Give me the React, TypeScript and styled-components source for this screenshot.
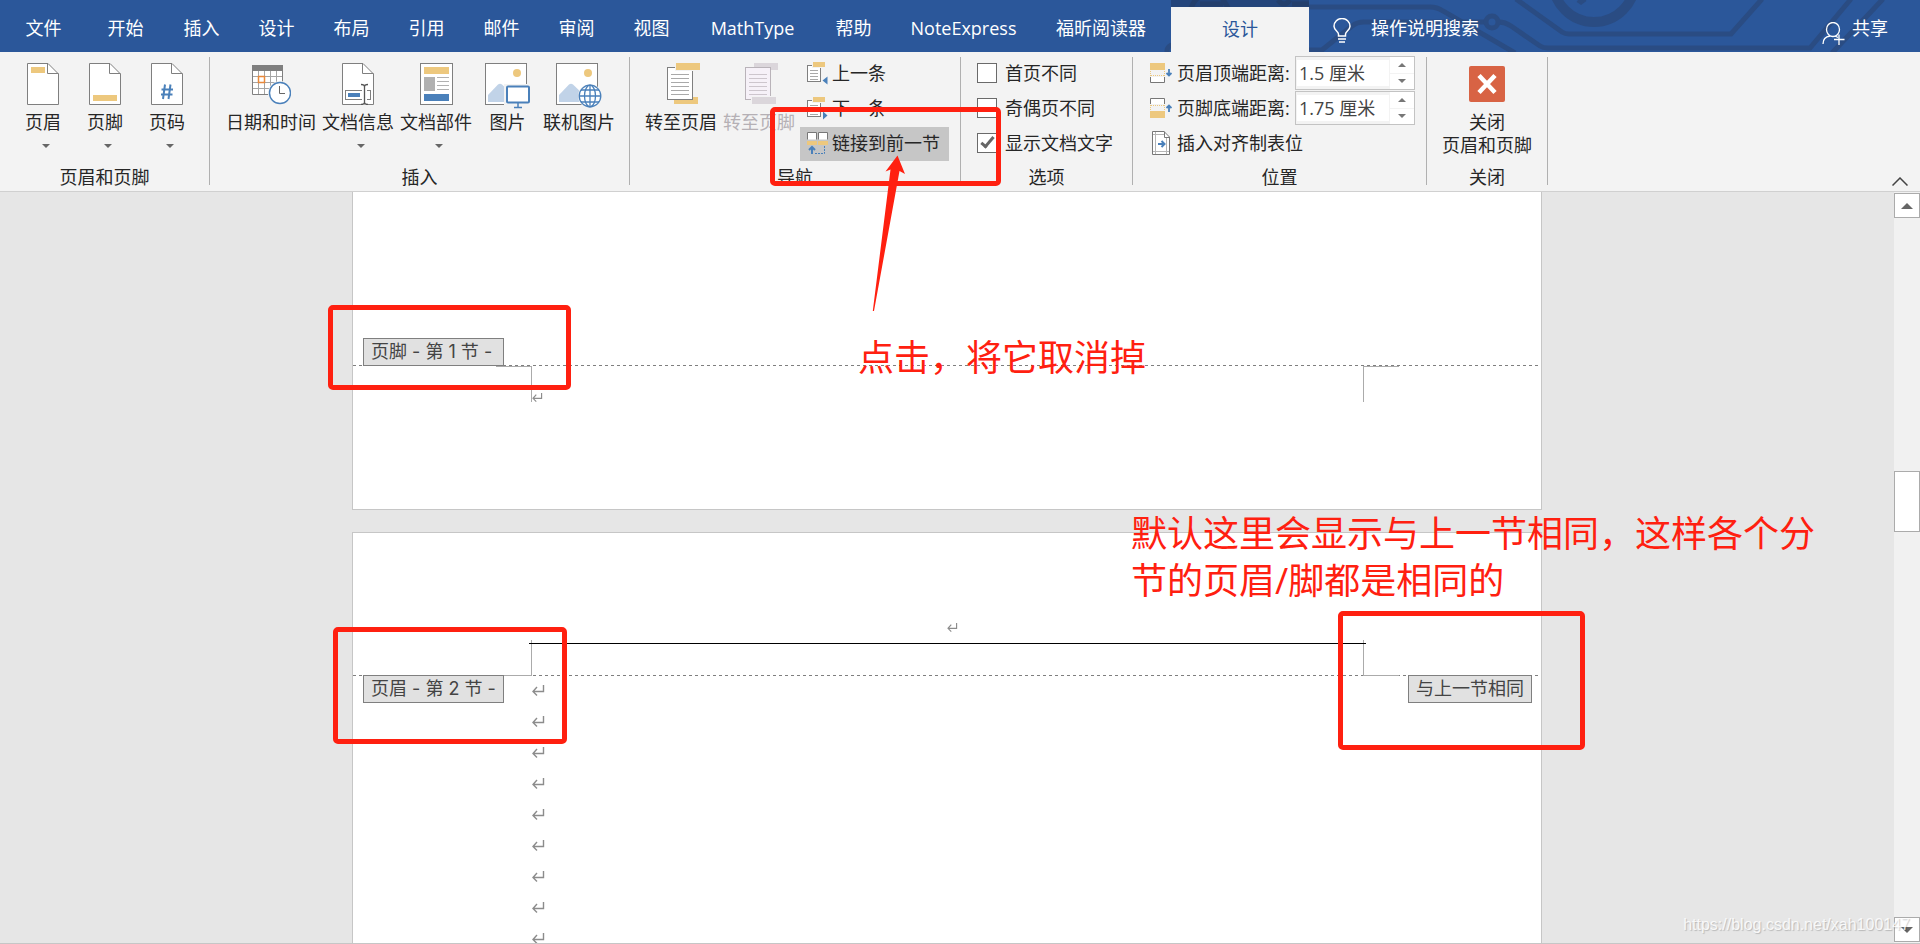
import React from 'react';
import styled, { createGlobalStyle, css } from 'styled-components';

const RED = '#ff2010';
const BLUE = '#2b579a';
const INK = '#262626';
const GOLD = '#edc87e';
const ACCENT = '#4a80ba';
const LINE = '#7f7f7f';

const GlobalStyle = createGlobalStyle`
  *, *::before, *::after { box-sizing: border-box; }
  body { margin: 0; }
  body, button, input {
    font-family: 'Open Sans', 'Noto Sans CJK SC', sans-serif;
    font-size: 18px;
    color: ${INK};
  }
  button { border: 0; padding: 0; background: none; cursor: pointer; white-space: nowrap; }
  svg { display: block; flex: none; }
`;

const Shell = styled.div`
  position: relative;
  display: flex;
  flex-direction: column;
  height: 100vh;
  overflow: hidden;
  background: #e6e6e6;
`;

/* ---------- title tabs ---------- */

const TabBar = styled.header`
  position: relative;
  display: flex;
  flex: none;
  align-items: stretch;
  height: 52px;
  background: ${BLUE};
`;

const Circuit = styled.svg`
  position: absolute;
  top: 0;
  right: 0;
`;

const Tabs = styled.nav`
  position: relative;
  display: flex;
  padding-left: 6px;
`;

const Tab = styled.button<{ $width?: number; $active?: boolean }>`
  width: ${(p) => p.$width ?? 75}px;
  line-height: 24px;
  padding-top: 4px;
  color: #fff;
  ${(p) =>
    p.$active &&
    css`
      margin: 7px 0 0 11px;
      padding: 0 0 2px;
      background: #f3f3f3;
      color: ${BLUE};
    `}
`;

const TellMe = styled.button`
  position: relative;
  display: flex;
  align-items: center;
  gap: 20px;
  padding: 4px 0 0 24px;
  color: #fff;
  line-height: 24px;
`;

const Share = styled(TellMe)`
  margin-left: auto;
  padding: 4px 32px 0 0;
  gap: 7px;
`;

const ShareIcon = styled.svg`
  margin-top: 10px;
`;

const BulbIcon = styled.svg`
  margin-top: 4px;
`;

/* ---------- ribbon ---------- */

const Ribbon = styled.section`
  position: relative;
  display: flex;
  flex: none;
  height: 140px;
  padding-top: 5px;
  background: #f3f3f3;
  border-bottom: 1px solid #d0d0d0;
`;

const GroupBox = styled.div<{ $width: number }>`
  display: flex;
  flex: none;
  flex-direction: column;
  width: ${(p) => p.$width}px;
`;

const GroupBody = styled.div<{ $pad: number }>`
  display: flex;
  height: 107px;
  padding-left: ${(p) => p.$pad}px;
`;

const GroupLabel = styled.div`
  line-height: 27px;
  text-align: center;
`;

const Separator = styled.div`
  flex: none;
  width: 1px;
  height: 128px;
  background: #b0b0b0;
`;

const BigBox = styled.button<{ $min: number }>`
  display: flex;
  flex-direction: column;
  align-items: center;
  min-width: ${(p) => p.$min}px;
  padding: 6px 3px 0;
  &:disabled { color: #b5b0b5; cursor: default; }
`;

const IconSlot = styled.span`
  display: flex;
  height: 48px;
`;

const CloseSlot = styled(IconSlot)`
  padding-top: 3px;
`;

const BigLabel = styled.span`
  line-height: 23px;
`;

const DropArrow = styled.span`
  width: 0;
  margin: 10px 0 0 5px;
  border: 4px solid transparent;
  border-top-color: #666;
  border-bottom: 0;
`;

const Stack = styled.div`
  display: grid;
  grid-auto-rows: 34px;
  row-gap: 1px;
  align-content: start;
  margin-top: -1px;
`;

const SmallButton = styled.button<{ $pressed?: boolean }>`
  display: flex;
  align-items: center;
  gap: 4px;
  padding: 0 9px 2px 7px;
  line-height: 24px;
  background: ${(p) => (p.$pressed ? '#c6c6c6' : 'none')};
`;

const NavStack = styled(Stack)`
  margin: 0 0 0 2px;
`;

const CheckLabel = styled.label`
  display: flex;
  align-items: center;
  gap: 8px;
  line-height: 24px;
  white-space: nowrap;
`;

const Check = styled.input`
  appearance: none;
  width: 20px;
  height: 20px;
  margin: 0;
  border: 1px solid #6a6a6a;
  background: #fff;
  display: grid;
  place-items: center;
  &:checked::before {
    content: '';
    width: 7px;
    height: 14px;
    margin-bottom: 4px;
    border: solid #666;
    border-width: 0 3px 3px 0;
    transform: rotate(40deg);
  }
`;

const Field = styled.div`
  display: flex;
  align-items: center;
  gap: 5px;
`;

const FieldLabel = styled.label`
  width: 113px;
  line-height: 24px;
  white-space: nowrap;
`;

const PlainRow = styled.button`
  display: flex;
  align-items: center;
  gap: 5px;
  line-height: 24px;
`;

const SpinBox = styled.div`
  display: flex;
  width: 120px;
  height: 34px;
  border: 1px solid #c3c3c3;
`;

const SpinInput = styled.input`
  width: 92px;
  height: 26px;
  margin: 3px 1px;
  padding: 0 2px 2px;
  border: 0;
  background: #fff;
  color: #444;
`;

const SpinButtons = styled.div`
  display: grid;
  flex: 1;
  grid-template-rows: 1fr 1fr;
  row-gap: 1px;
`;

const SpinButton = styled.button<{ $down?: boolean }>`
  display: grid;
  place-items: center;
  background: #fff;
  &::before {
    content: '';
    border: 4px solid transparent;
    ${(p) =>
      p.$down
        ? 'border-top-color: #777; border-bottom: 0;'
        : 'border-bottom-color: #777; border-top: 0;'}
  }
`;

const Collapse = styled.button`
  align-self: flex-end;
  margin: 0 12px 5px auto;
`;

/* ---------- document ---------- */

const Workspace = styled.main`
  display: flex;
  flex: 1;
  min-height: 0;
  border-bottom: 1px solid #c6c6c6;
`;

const Canvas = styled.div`
  display: flex;
  flex: 1;
  justify-content: center;
  min-width: 0;
`;

const Pages = styled.div`
  position: relative;
  display: flex;
  flex-direction: column;
  gap: 22px;
  width: 1190px;
`;

const FirstPage = styled.section`
  flex: none;
  height: 318px;
  padding-top: 146px;
  background: #fff;
  border: 1px solid #c6c6c6;
  border-top: 0;
`;

const SecondPage = styled.section`
  flex: 1;
  min-height: 0;
  overflow: hidden;
  background: #fff;
  border: 1px solid #c6c6c6;
  border-bottom: 0;
`;

const Dashes = styled.div`
  height: 1px;
  background: repeating-linear-gradient(90deg, ${LINE} 0 3px, transparent 3px 6px);
`;

const Tag = styled.div<{ $min?: number }>`
  position: relative;
  flex: none;
  min-width: ${(p) => p.$min ?? 0}px;
  height: 28px;
  padding: 0 7px;
  border: 1px solid ${LINE};
  background: #e1e1e1;
  color: #444;
  font-family: Inter, 'Noto Sans CJK SC', sans-serif;
  line-height: 25px;
  white-space: nowrap;
`;

const TagRow = styled.div`
  display: flex;
  justify-content: space-between;
  align-items: flex-start;
  height: 27px;
  padding: 0 9px 0 10px;
`;

const BodyRow = styled(TagRow)`
  height: auto;
  margin-top: -1px;
`;

const FooterArea = styled.div`
  display: flex;
  padding: 0 142px 0 143px;
`;

const HeaderArea = styled(FooterArea)`
  height: 35px;
`;

const Corner = styled.span<{ $side: 'left' | 'right'; $edge: 'top' | 'bottom' }>`
  flex: none;
  width: 36px;
  height: 36px;
  border: 0 solid #ababab;
  border-${(p) => p.$edge}-width: 1px;
  border-${(p) => (p.$side === 'left' ? 'right' : 'left')}-width: 1px;
`;

const FooterText = styled.div`
  display: flex;
  flex: 1;
  align-items: flex-end;
`;

const HeaderRule = styled.span`
  position: relative;
  flex: 1;
  height: 1px;
  margin: 3px -3px 0;
  background: #000;
`;

const HeaderMark = styled.div`
  display: flex;
  justify-content: center;
  align-items: center;
  height: 107px;
  padding: 81px 0 0 11px;
`;

const Paragraphs = styled.div`
  flex: 1;
  padding-left: 28px;
`;

const Paragraph = styled.div`
  display: flex;
  align-items: center;
  height: 31px;
`;

/* ---------- scroll bar ---------- */

const ScrollBar = styled.div`
  display: flex;
  flex: none;
  flex-direction: column;
  width: 26px;
  padding: 1px 0;
  background: #f1f1f1;
`;

const ScrollButton = styled.button<{ $down?: boolean }>`
  display: grid;
  flex: none;
  place-items: center;
  height: 25px;
  border: 1px solid #ababab;
  background: #fff;
  &::before {
    content: '';
    border: 6px solid transparent;
    ${(p) =>
      p.$down
        ? 'border-top-color: #666; border-bottom: 0;'
        : 'border-bottom-color: #666; border-top: 0;'}
  }
`;

const ScrollTrack = styled.div`
  flex: 1;
  padding-top: 253px;
`;

const Thumb = styled.div`
  height: 61px;
  border: 1px solid #ababab;
  background: #fff;
`;

/* ---------- hand-made annotations ---------- */

const Frame = styled.div<{ $x: number; $y: number; $w: number; $h: number }>`
  position: absolute;
  z-index: 2;
  left: ${(p) => p.$x}px;
  top: ${(p) => p.$y}px;
  width: ${(p) => p.$w}px;
  height: ${(p) => p.$h}px;
  border: 5px solid ${RED};
  border-radius: 5px;
  pointer-events: none;
`;

const Arrow = styled.svg`
  position: absolute;
  z-index: 3;
  left: 872px;
  top: 103px;
  pointer-events: none;
`;

const Note = styled.p<{ $x: number; $y: number; $w: number }>`
  position: absolute;
  z-index: 2;
  left: ${(p) => p.$x}px;
  top: ${(p) => p.$y}px;
  width: ${(p) => p.$w}px;
  margin: 0;
  color: ${RED};
  font-size: 36px;
  line-height: 47px;
`;

const Watermark = styled.span`
  position: absolute;
  right: 10px;
  bottom: 8px;
  color: rgba(255, 255, 255, 0.85);
  font-family: 'Liberation Sans', Arial, sans-serif;
  font-size: 16px;
  line-height: 22px;
  text-shadow: 1px 1px 1px rgba(0, 0, 0, 0.2);
  pointer-events: none;
`;

/* ---------- icons ---------- */

const PageSheet = ({ children }: { children?: React.ReactNode }) => (
  <svg width="32" height="42" viewBox="0 0 32 42" fill="none" stroke={LINE}>
    <path d="M.5.5H21L31.5 11V41.5H.5Z" fill="#fff" />
    <path d="M20.5.5V10.5H31.5" />
    {children}
  </svg>
);

const HeaderIcon = () => (
  <PageSheet><rect x="4" y="4" width="14" height="6" fill={GOLD} stroke="none" /></PageSheet>
);
const FooterIcon = () => (
  <PageSheet><rect x="4" y="32" width="24" height="6" fill={GOLD} stroke="none" /></PageSheet>
);
const NumberIcon = () => (
  <PageSheet><path d="M14 21.5L12 36M19.500 21.5L17.500 36M10.500 26.500H22M10 31.500H21.500" stroke={ACCENT} strokeWidth="2" /></PageSheet>
);

const DateIcon = () => (
  <svg width="39" height="44" viewBox="0 0 39 44" fill="none">
    <path d="M.5 4V31.500H30.500V4Z" fill="#fff" stroke={LINE} />
    <path d="M6.500 8V31M12.500 8V31M18.500 8V31M24.500 8V31M1 13.500H30M1 19.500H30M1 25.500H30" stroke="#a5a5a5" />
    <rect y="2" width="31" height="6" fill={LINE} />
    <rect x="6.500" y="13.500" width="6" height="6" fill="#fff" stroke="#e8883a" strokeWidth="1.500" />
    <circle cx="28" cy="30" r="12" fill="#f3f3f3" />
    <circle cx="28" cy="30" r="10.500" fill="#fff" stroke={ACCENT} strokeWidth="1.400" />
    <path d="M27.500 23V30.500H33" stroke="#666" />
  </svg>
);

const DocInfoIcon = () => (
  <PageSheet>
    <rect x="3.500" y="27.500" width="25" height="9" fill="#fff" />
    <rect x="6" y="30" width="12" height="4" fill={ACCENT} stroke="none" />
    <path d="M22.500 22V42" stroke="#fff" strokeWidth="5" />
    <path d="M19 21.500C21 21.500 22.500 22 22.500 23.500V39.500C22.500 41 21 41.500 19 41.500M26 21.500C24 21.500 22.500 22 22.500 23.500V39.500C22.500 41 24 41.500 26 41.500" stroke="#555" strokeWidth="1.300" />
  </PageSheet>
);

const PartsIcon = () => (
  <svg width="33" height="42" viewBox="0 0 33 42">
    <rect x=".5" y=".5" width="32" height="41" fill="#fff" stroke={LINE} />
    <rect x="4" y="4" width="25" height="7" fill={GOLD} />
    <rect x="4" y="14" width="11" height="14" fill="#b1b1b1" />
    <path d="M17 14.500H29M17 18.500H29M17 22.500H29M17 26.500H29" stroke="#b1b1b1" />
    <rect x="4" y="31" width="25" height="7" fill={ACCENT} />
  </svg>
);

const Picture = ({ children }: { children: React.ReactNode }) => (
  <svg width="46" height="46" viewBox="0 0 46 46" fill="none">
    <rect x=".5" y=".5" width="41" height="41" fill="#fff" stroke={LINE} />
    <circle cx="32" cy="10" r="4" fill={GOLD} />
    <path d="M3 39V32L13 21.500Q15 20 17 21.500L30 34V39Z" fill="#c1d3e8" />
    {children}
  </svg>
);

const PictureIcon = () => (
  <Picture>
    <rect x="19" y="21" width="27" height="21" fill="#f3f3f3" />
    <rect x="22" y="23.500" width="22" height="16" rx="1" fill="#fff" stroke={ACCENT} strokeWidth="2" />
    <path d="M33 40V44M29 44.500H37" stroke={ACCENT} strokeWidth="1.500" />
  </Picture>
);

const OnlinePictureIcon = () => (
  <Picture>
    <circle cx="34" cy="33" r="12" fill="#f3f3f3" />
    <g stroke={ACCENT} strokeWidth="1.300">
      <circle cx="34" cy="33" r="10.800" fill="#fff" />
      <ellipse cx="34" cy="33" rx="5.500" ry="10.800" />
      <path d="M34 22V44M23 33H45M25 27H43M25 39H43" />
    </g>
  </Picture>
);

const GotoHeaderIcon = () => (
  <svg width="37" height="42" viewBox="-4 0 37 42">
    <rect x="7" y="34" width="24" height="7" fill={GOLD} />
    <rect x=".5" y="4.500" width="25" height="32" fill="#fff" stroke={LINE} />
    <rect x="8" y="0" width="25" height="8" fill="#f3f3f3" />
    <rect x="9" y="0" width="24" height="7" fill={GOLD} />
    <path d="M4 11.500H22M4 15.500H22M4 19.500H22M4 23.500H22M4 27.500H22M4 31.500H22" stroke="#a9a9a9" />
  </svg>
);

const GotoFooterIcon = () => (
  <svg width="37" height="42" viewBox="-4 0 37 42">
    <rect x="9" y="0" width="24" height="7" fill="#dbd6db" />
    <rect x=".5" y="4.500" width="25" height="32" fill="#f6f1f8" stroke="#b9b3b9" />
    <rect x="6" y="33" width="26" height="8" fill="#f3f3f3" />
    <rect x="7" y="34" width="24" height="7" fill="#dbd6db" />
    <path d="M4 11.500H22M4 15.500H22M4 19.500H22M4 23.500H22M4 27.500H22M4 31.500H22" stroke="#cdc6cd" />
  </svg>
);

const StepIcon = ({ next }: { next?: boolean }) => (
  <svg width="21" height="23" viewBox="0 0 21 23">
    <rect x=".5" y="3.500" width="13" height="16" fill="#fff" stroke={LINE} />
    <rect x="5" width="13" height="6" fill="#f3f3f3" />
    <rect x="6" width="12" height="5" fill={GOLD} />
    <path d="M3 8.500H11M3 11.500H11M3 14.500H11M3 17.500H11" stroke="#a9a9a9" />
    <path d={next ? 'M16 14.500V22.500L20.500 18.500Z' : 'M20.500 14.500V22.500L15.500 18.500Z'} fill={ACCENT} />
  </svg>
);

const LinkIcon = () => (
  <svg width="21" height="22" viewBox="0 0 21 22" fill="none">
    <path d="M.5 7.500V.5H9.500V7.500M11.500 7.500V.5H20.500V7.500" fill="#fff" stroke="#777" />
    <path d="M0 11H10M11 11H21" stroke={GOLD} strokeWidth="4" />
    <path d="M5 22V15M2 18L5 15L8 18" stroke={ACCENT} strokeWidth="2" />
    <path d="M8 21.500H17.500V14" stroke={ACCENT} strokeDasharray="2 1" />
  </svg>
);

const DistanceIcon = ({ footer }: { footer?: boolean }) => (
  <svg width="22" height="20" viewBox="0 0 22 20" fill="none">
    {footer ? (
      <>
        <path d="M.5 6V.5H14.500V6" fill="#fff" stroke="#777" />
        <path d="M.5 7V12M14.500 7V12M1 7.500H15" stroke={GOLD} strokeDasharray="1 1" />
        <rect y="13" width="15" height="7" fill={GOLD} />
        <path d="M19 14V7M16.500 10L19 7.500L21.500 10" stroke={ACCENT} strokeWidth="1.800" />
      </>
    ) : (
      <>
        <rect width="15" height="7" fill={GOLD} />
        <path d="M.5 8V13M14.500 8V13M1 12.500H15" stroke={GOLD} strokeDasharray="1 1" />
        <path d="M.5 14V19.500H14.500V14" fill="#fff" stroke="#777" />
        <path d="M19 6V13M16.500 10L19 12.500L21.500 10" stroke={ACCENT} strokeWidth="1.800" />
      </>
    )}
  </svg>
);

const TabStopIcon = () => (
  <svg width="22" height="24" viewBox="0 0 22 24" fill="none" stroke="#777">
    <path d="M2.500.5H14L19.500 6V23.500H2.500Z" fill="#fff" />
    <path d="M14.500.5V6.500H19.500" />
    <path d="M5.500 1V23M16.500 7V23M3 3.500H14M3 20.500H19" stroke="#b5b5b5" />
    <path d="M8 13H14M11.500 10L14.500 13L11.500 16" stroke={ACCENT} strokeWidth="2" />
  </svg>
);

const CloseIcon = () => (
  <svg width="36" height="36" viewBox="0 0 36 36" fill="none">
    <rect width="36" height="36" rx="2" fill="#d86344" />
    <path d="M10 9.500L26 26.500M26 9.500L10 26.500" stroke="#fff" strokeWidth="4.500" />
  </svg>
);

const ReturnMark = ({ small }: { small?: boolean }) => (
  <svg width={small ? 11 : 13} height={small ? 9 : 11} viewBox="0 0 13 11" fill="none" stroke="#8c8c8c" strokeWidth="1.400">
    <path d="M11.500 0V6.500H1M5 2L1 6.500L5 10.500" />
  </svg>
);

/* ---------- pieces ---------- */

type BigButtonProps = {
  icon: React.ReactNode;
  label: string;
  menu?: boolean;
  min?: number;
  disabled?: boolean;
};

const BigButton = ({ icon, label, menu, min = 62, disabled }: BigButtonProps) => (
  <BigBox $min={min} disabled={disabled}>
    <IconSlot>{icon}</IconSlot>
    <BigLabel>{label}</BigLabel>
    {menu && <DropArrow />}
  </BigBox>
);

type GroupProps = { label: string; width: number; pad: number; children: React.ReactNode };

const Group = ({ label, width, pad, children }: GroupProps) => (
  <>
    <GroupBox $width={width}>
      <GroupBody $pad={pad}>{children}</GroupBody>
      <GroupLabel>{label}</GroupLabel>
    </GroupBox>
    <Separator />
  </>
);

type DistanceProps = { id: string; label: string; value: string; footer?: boolean };

const Distance = ({ id, label, value, footer }: DistanceProps) => (
  <Field>
    <DistanceIcon footer={footer} />
    <FieldLabel htmlFor={id}>{label}</FieldLabel>
    <SpinBox>
      <SpinInput id={id} defaultValue={value} />
      <SpinButtons>
        <SpinButton aria-label="增加" />
        <SpinButton $down aria-label="减少" />
      </SpinButtons>
    </SpinBox>
  </Field>
);

const TABS: { label: string; width?: number }[] = [
  { label: '文件' },
  { label: '开始', width: 89 },
  { label: '插入', width: 63 },
  { label: '设计', width: 87 },
  { label: '布局', width: 63 },
  { label: '引用', width: 87 },
  { label: '邮件', width: 63 },
  { label: '审阅', width: 87 },
  { label: '视图', width: 63 },
  { label: 'MathType', width: 139 },
  { label: '帮助', width: 63 },
  { label: 'NoteExpress', width: 157 },
  { label: '福昕阅读器', width: 118 },
];

export default function App() {
  return (
    <Shell>
      <GlobalStyle />
      <TabBar>
        <Circuit width="757" height="52" viewBox="1163 0 757 52" fill="none" stroke="#2a4c83" strokeWidth="5">
          <path d="M1309 7H1430Q1437 7 1443 11L1515 53" />
          <path d="M1305 50H1322L1352 26Q1357 22 1364 22H1485M1499 22Q1505 22 1511 26L1540 46Q1543 48 1548 48H1810L1851-1" />
          <circle cx="1492" cy="22" r="6" />
          <path d="M1516-1L1562 32Q1565 34 1569 34H1731L1762-1M1883-1L1832 53" />
          <circle cx="1594" cy="-19" r="41" strokeWidth="10" />
          <path d="M1578 0L1581 2L1585-1" />
          <circle cx="1173" cy="51" r="6" />
          <rect x="1171" y="0" width="138" height="7" fill="#24457b" stroke="none" />
          <path d="M1191 8Q1194 0 1200-4M1228 8Q1224 0 1220-4M1200 4H1223M1278 0Q1284 8 1290 0M1292 4H1309" stroke="#243f6c" />
        </Circuit>
        <Tabs>
          {TABS.map((t, i) => (
            <Tab key={i} $width={t.width}>{t.label}</Tab>
          ))}
          <Tab $width={138} $active>设计</Tab>
        </Tabs>
        <TellMe>
          <BulbIcon width="18" height="25" viewBox="0 0 18 25" fill="none" stroke="#fff" strokeWidth="1.500">
            <path d="M5.500 18V16C5.500 13.500 1 12 1 8.300A8 7.800 0 0 1 17 8.300C17 12 12.500 13.500 12.500 16V18Z" />
            <path d="M5 21H13M6 24H12" />
          </BulbIcon>
          操作说明搜索
        </TellMe>
        <Share>
          <ShareIcon width="23" height="23" viewBox="0 0 23 23" fill="none" stroke="#fff" strokeWidth="1.300">
            <ellipse cx="11" cy="7.500" rx="6.500" ry="7" />
            <path d="M1 22C1 17 4 14.500 8 14M13 14L16 15.500M17 12.500V23M12 17.500H22.500" />
          </ShareIcon>
          共享
        </Share>
      </TabBar>

      <Ribbon>
        <Group label="页眉和页脚" width={209} pad={12}>
          <BigButton icon={<HeaderIcon />} label="页眉" menu />
          <BigButton icon={<FooterIcon />} label="页脚" menu />
          <BigButton icon={<NumberIcon />} label="页码" menu />
        </Group>
        <Group label="插入" width={419} pad={13}>
          <BigButton icon={<DateIcon />} label="日期和时间" />
          <BigButton icon={<DocInfoIcon />} label="文档信息" menu />
          <BigButton icon={<PartsIcon />} label="文档部件" menu />
          <BigButton icon={<PictureIcon />} label="图片" min={65} />
          <BigButton icon={<OnlinePictureIcon />} label="联机图片" />
        </Group>
        <Group label="导航" width={330} pad={12}>
          <BigButton icon={<GotoHeaderIcon />} label="转至页眉" />
          <BigButton icon={<GotoFooterIcon />} label="转至页脚" disabled />
          <NavStack>
            <SmallButton><StepIcon />上一条</SmallButton>
            <SmallButton><StepIcon next />下一条</SmallButton>
            <SmallButton $pressed><LinkIcon />链接到前一节</SmallButton>
          </NavStack>
        </Group>
        <Group label="选项" width={171} pad={16}>
          <Stack>
            <CheckLabel><Check type="checkbox" />首页不同</CheckLabel>
            <CheckLabel><Check type="checkbox" />奇偶页不同</CheckLabel>
            <CheckLabel><Check type="checkbox" defaultChecked />显示文档文字</CheckLabel>
          </Stack>
        </Group>
        <Group label="位置" width={293} pad={17}>
          <Stack>
            <Distance id="header-distance" label="页眉顶端距离:" value="1.5 厘米" />
            <Distance id="footer-distance" label="页脚底端距离:" value="1.75 厘米" footer />
            <PlainRow><TabStopIcon />插入对齐制表位</PlainRow>
          </Stack>
        </Group>
        <Group label="关闭" width={120} pad={12}>
          <BigBox $min={62}>
            <CloseSlot><CloseIcon /></CloseSlot>
            <BigLabel>关闭</BigLabel>
            <BigLabel>页眉和页脚</BigLabel>
          </BigBox>
        </Group>
        <Collapse aria-label="折叠功能区">
          <svg width="16" height="9" viewBox="0 0 16 9" fill="none" stroke="#444" strokeWidth="1.500">
            <path d="M.5 8.500L8 1L15.500 8.500" />
          </svg>
        </Collapse>
        <Frame $x={770} $y={55} $w={231} $h={79} />
        <Arrow width="34" height="157" viewBox="0 0 34 157">
          <path d="M25.500 0.500L33 19L27.500 16L2 156H.8L18.500 14.500L13.500 16.500Z" fill={RED} />
        </Arrow>
      </Ribbon>

      <Workspace>
        <Canvas>
          <Pages>
            <FirstPage>
              <TagRow><Tag $min={141}>页脚 - 第 1 节 -</Tag></TagRow>
              <Dashes />
              <FooterArea>
                <Corner $side="left" $edge="top" />
                <FooterText><ReturnMark small /></FooterText>
                <Corner $side="right" $edge="top" />
              </FooterArea>
            </FirstPage>
            <SecondPage>
              <HeaderMark><ReturnMark small /></HeaderMark>
              <HeaderArea>
                <Corner $side="left" $edge="bottom" />
                <HeaderRule />
                <Corner $side="right" $edge="bottom" />
              </HeaderArea>
              <Dashes />
              <BodyRow>
                <Tag $min={141}>页眉 - 第 2 节 -</Tag>
                <Paragraphs>
                  {Array.from({ length: 9 }, (_, i) => (
                    <Paragraph key={i}><ReturnMark /></Paragraph>
                  ))}
                </Paragraphs>
                <Tag>与上一节相同</Tag>
              </BodyRow>
            </SecondPage>
            <Frame $x={-24} $y={113} $w={243} $h={85} />
            <Frame $x={-19} $y={435} $w={234} $h={117} />
            <Frame $x={986} $y={419} $w={247} $h={139} />
            <Note $x={506} $y={142} $w={300}>点击，将它取消掉</Note>
            <Note $x={779} $y={318} $w={700}>默认这里会显示与上一节相同，这样各个分节的页眉/脚都是相同的</Note>
          </Pages>
        </Canvas>
        <ScrollBar>
          <ScrollButton aria-label="向上滚动" />
          <ScrollTrack><Thumb /></ScrollTrack>
          <ScrollButton $down aria-label="向下滚动" />
        </ScrollBar>
      </Workspace>
      <Watermark>https://blog.csdn.net/xah100147</Watermark>
    </Shell>
  );
}
